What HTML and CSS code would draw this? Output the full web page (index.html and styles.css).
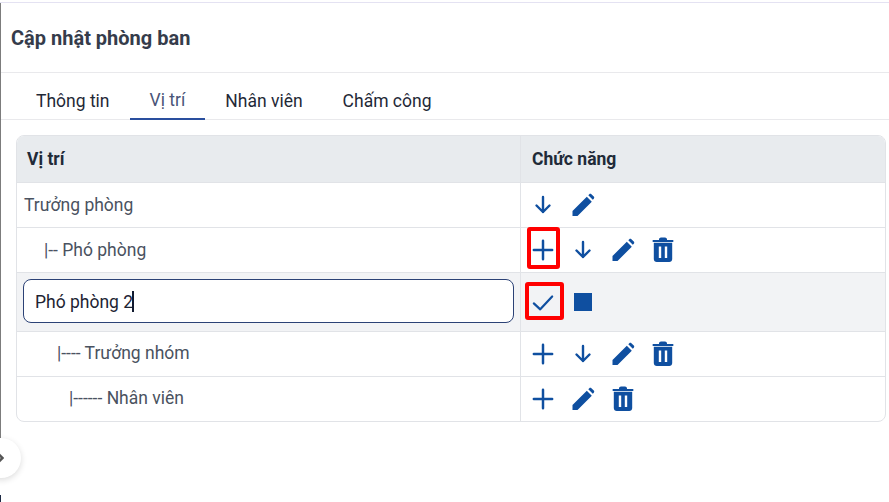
FILE: index.html
```html
<!DOCTYPE html>
<html lang="vi">
<head>
<meta charset="utf-8">
<title>Cập nhật phòng ban</title>
<link rel="stylesheet" href="styles.css">
</head>
<body>
<svg class="sprite" width="0" height="0">
  <symbol id="i-down" viewBox="0 0 24 24"><path d="M12 4v15M5.500 12.500 12 19l6.500-6.500" fill="none" stroke="currentColor" stroke-width="2.400" stroke-linecap="round" stroke-linejoin="round"/></symbol>
  <symbol id="i-edit" viewBox="0 0 24 24"><path d="M1.500 23v-5L15.800 3.700l5 5L6.500 23h-5ZM17.300 2.200l1-1c.6-.6 1.500-.6 2.100 0l2.400 2.400c.6.6.6 1.500 0 2.100l-1 1-4.500-4.500Z" fill="currentColor"/></symbol>
  <symbol id="i-plus" viewBox="0 0 24 24"><path d="M12 2v20M2 12h20" fill="none" stroke="currentColor" stroke-width="2.700" stroke-linecap="round"/></symbol>
  <symbol id="i-trash" viewBox="0 0 22 26"><path d="M7 2.500C7 1.400 7.900.500 9 .500h4c1.100 0 2 .9 2 2V3h5.500c.6 0 1 .4 1 1s-.4 1-1 1h-19c-.6 0-1-.4-1-1s.4-1 1-1H7v-.5ZM1.800 5.800h18.400V22c0 1.700-1.300 3-3 3H4.800c-1.700 0-3-1.300-3-3V5.800Zm5 3.700V21h2.400V9.500H6.800Zm6 0V21h2.400V9.500h-2.400Z" fill="currentColor" fill-rule="evenodd"/></symbol>
  <symbol id="i-check" viewBox="0 0 24 24"><path d="M2 13.500 9 20 22 6" fill="none" stroke="currentColor" stroke-width="2.400" stroke-linecap="round" stroke-linejoin="round"/></symbol>
</svg>

<main class="page">
  <header class="title-bar"><h1 class="title">Cập nhật phòng ban</h1></header>

  <nav class="tabs">
    <a class="tab">Thông tin</a>
    <a class="tab tab-active">Vị trí</a>
    <a class="tab">Nhân viên</a>
    <a class="tab">Chấm công</a>
  </nav>

  <section class="table">
    <div class="row row-head">
      <div class="cell-name">Vị trí</div>
      <div class="cell-actions">Chức năng</div>
    </div>

    <div class="row row-plain">
      <div class="cell-name">Trưởng phòng</div>
      <div class="cell-actions">
        <span class="btn"><svg class="ic"><use href="#i-down"/></svg></span>
        <span class="btn"><svg class="ic"><use href="#i-edit"/></svg></span>
      </div>
    </div>

    <div class="row row-plain">
      <div class="cell-name level-1">|-- Phó phòng</div>
      <div class="cell-actions">
        <span class="btn mark-plus"><svg class="ic ic-plus"><use href="#i-plus"/></svg></span>
        <span class="btn"><svg class="ic"><use href="#i-down"/></svg></span>
        <span class="btn"><svg class="ic"><use href="#i-edit"/></svg></span>
        <span class="btn"><svg class="ic-trash"><use href="#i-trash"/></svg></span>
      </div>
    </div>

    <div class="row row-edit">
      <div class="cell-name cell-input">
        <div class="input">Phó phòng 2<span class="caret"></span></div>
      </div>
      <div class="cell-actions">
        <span class="btn mark-check"><svg class="ic ic-check"><use href="#i-check"/></svg></span>
        <span class="btn"><span class="stop"></span></span>
      </div>
    </div>

    <div class="row row-plain">
      <div class="cell-name level-2">|---- Trưởng nhóm</div>
      <div class="cell-actions">
        <span class="btn"><svg class="ic ic-plus"><use href="#i-plus"/></svg></span>
        <span class="btn"><svg class="ic"><use href="#i-down"/></svg></span>
        <span class="btn"><svg class="ic"><use href="#i-edit"/></svg></span>
        <span class="btn"><svg class="ic-trash"><use href="#i-trash"/></svg></span>
      </div>
    </div>

    <div class="row row-plain row-last">
      <div class="cell-name level-3">|------ Nhân viên</div>
      <div class="cell-actions">
        <span class="btn"><svg class="ic ic-plus"><use href="#i-plus"/></svg></span>
        <span class="btn"><svg class="ic"><use href="#i-edit"/></svg></span>
        <span class="btn"><svg class="ic-trash"><use href="#i-trash"/></svg></span>
      </div>
    </div>
  </section>
</main>

<div class="rail"></div>
<div class="rail-foot"></div>
<div class="toggle"><svg class="toggle-icon" viewBox="0 0 8 12"><path d="M1 1l5 5-5 5" fill="none" stroke="currentColor" stroke-width="3.500"/></svg></div>
</body>
</html>
```

FILE: styles.css
```css
* { box-sizing: border-box; }

html, body {
  margin: 0;
  height: 100%;
  overflow: hidden;
  background: #fff;
}

body {
  font-family: Roboto, "Noto Sans", sans-serif;
  color: #4a5260;
}

.sprite { position: absolute; }

.page {
  margin-top: 2px;
  border-top: 1px solid #e4e2f2;
}

.title-bar {
  height: 70px;
  display: flex;
  align-items: center;
  padding-left: 11px;
  border-bottom: 1px solid #e9e9ec;
}

.title {
  margin: 0;
  font-size: 20px;
  font-weight: 700;
  color: #353c4b;
}

.tabs {
  height: 47px;
  display: flex;
  padding-left: 16px;
  border-bottom: 1px solid #e9e9ec;
}

.tab {
  padding: 9px 20px 0;
  height: 47px;
  display: flex;
  align-items: center;
  font-size: 17.500px;
  color: #1f2937;
}

.tab-active {
  color: #4a5578;
  border-bottom: 2px solid #2a4f9e;
}

.table {
  margin: 15px 3px 0 16px;
  border: 1px solid #e1e3e7;
  border-radius: 8px;
  overflow: hidden;
}

.row {
  display: grid;
  grid-template-columns: 504px 1fr;
  border-bottom: 1px solid #e1e3e7;
}

.row-last { border-bottom: 0; }

.row-head {
  height: 47px;
  background: #e8ebee;
  font-size: 17.500px;
  font-weight: 700;
  color: #212a38;
}

.row-plain { height: 45px; }
.row-plain.row-last { height: 44px; }

.row-edit {
  height: 59px;
  background: #f2f3f5;
}

.cell-name {
  display: flex;
  align-items: center;
  padding-left: 7px;
  padding-bottom: 1px;
  border-right: 1px solid #e1e3e7;
  font-size: 17.500px;
}

.row-head .cell-name { padding-left: 10px; }

.level-1 { padding-left: 27px; }
.level-2 { padding-left: 40px; padding-bottom: 3px; }
.level-3 { padding-left: 52px; padding-bottom: 3px; }

.cell-input { padding: 0 6px 2px; }

.input {
  width: 100%;
  height: 44px;
  display: flex;
  align-items: center;
  padding: 1px 0 0 11px;
  background: #fff;
  border: 1px solid #2c4276;
  border-radius: 8px;
  font-size: 17.500px;
  color: #1d2433;
}

.caret {
  width: 2px;
  height: 21px;
  margin-left: -1px;
  background: #111a30;
}

.cell-actions {
  display: flex;
  align-items: center;
  padding-left: 2px;
}

.row-head .cell-actions { padding-left: 11px; }

.btn {
  position: relative;
  width: 40px;
  height: 24px;
  display: flex;
  align-items: center;
  justify-content: center;
  color: #0f4fa0;
}

.ic { width: 24px; height: 24px; display: block; }
.ic-plus { width: 22px; height: 22px; }
.ic-check { width: 22px; height: 22px; }
.ic-trash { width: 22px; height: 26px; display: block; }

.stop {
  width: 18px;
  height: 18px;
  background: #0f4fa0;
}

.mark-plus::after,
.mark-check::after {
  content: "";
  box-sizing: border-box;
  position: absolute;
  border: 4px solid #f00;
  border-radius: 3px;
}

.mark-plus::after { left: 4px; top: -11px; width: 33px; height: 42px; }
.mark-check::after { left: 2px; top: -8px; width: 39px; height: 38px; }

.rail {
  position: absolute;
  left: 0;
  top: 3px;
  width: 1px;
  height: 435px;
  background: #7c7c7c;
}

.rail-foot {
  position: absolute;
  left: 0;
  top: 495px;
  width: 1px;
  height: 7px;
  background: #1d2a44;
}

.toggle {
  position: absolute;
  left: -19px;
  top: 438px;
  width: 40px;
  height: 40px;
  border-radius: 50%;
  background: #fff;
  box-shadow: 0 2px 6px rgba(0, 0, 0, .14);
  color: #555;
}

.toggle-icon {
  position: absolute;
  left: 17px;
  top: 15px;
  width: 6px;
  height: 10px;
}
```
